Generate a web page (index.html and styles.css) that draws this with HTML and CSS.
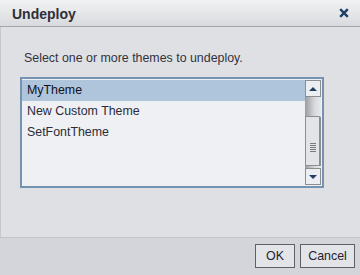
FILE: index.html
```html
<!DOCTYPE html>
<html lang="en">
<head>
    <meta charset="UTF-8">
    <title>Undeploy</title>
    <link rel="stylesheet" href="styles.css">
</head>
<body>
<div class="dialog">
    <div class="titlebar">
        <span class="title">Undeploy</span>
        <svg class="close" width="10" height="10" viewBox="0 0 10 10">
            <path d="M1.2 1.2 L8.8 8.8 M8.8 1.2 L1.2 8.8" stroke="#1f3f66" stroke-width="2.4" fill="none"/>
        </svg>
    </div>
    <div class="content">
        <p class="prompt">Select one or more themes to undeploy.</p>
        <div class="list">
            <div class="items">
                <div class="item selected">MyTheme</div>
                <div class="item">New Custom Theme</div>
                <div class="item">SetFontTheme</div>
            </div>
            <div class="scrollbar">
                <div class="sb-btn"><span class="arrow-up"></span></div>
                <div class="sb-track">
                    <div class="sb-thumb">
                        <div class="grip"></div>
                    </div>
                </div>
                <div class="sb-btn down"><span class="arrow-down"></span></div>
            </div>
        </div>
    </div>
    <div class="footer">
        <button class="btn ok">OK</button>
        <button class="btn cancel">Cancel</button>
    </div>
</div>
</body>
</html>
```

FILE: styles.css
```css
body {
    margin: 0;
    font-family: "Liberation Sans", Arial, sans-serif;
    background-color: #d3d5da;
}

.dialog {
    width: 360px;
    height: 275px;
    display: flex;
    flex-direction: column;
}

.titlebar {
    height: 27px;
    box-sizing: border-box;
    border-bottom: 1px solid #a4a6ab;
    background: linear-gradient(#f1f2f4, #d9dadd);
    display: flex;
    align-items: center;
    justify-content: space-between;
    padding: 0 11px 0 12px;
}

.title {
    font-size: 14px;
    font-weight: bold;
    color: #2e2e38;
    margin-top: 1px;
}

.close {
    display: block;
}

.content {
    height: 211px;
    box-sizing: border-box;
    background-color: #dfe0e4;
    border-left: 1px solid #c5c7cc;
    border-bottom: 1px solid #c2c4ca;
    padding: 24px 0 0 19px;
}

.prompt {
    margin: 0 0 12px 4px;
    font-size: 12.4px;
    color: #333340;
}

.list {
    width: 304px;
    height: 111px;
    box-sizing: border-box;
    border: 2px solid #7493b3;
    background-color: #eef0f3;
    display: flex;
}

.items {
    flex: 1;
    padding-top: 1px;
}

.item {
    height: 21px;
    line-height: 21px;
    padding-left: 5px;
    font-size: 12.4px;
    color: #2c2c38;
}

.item.selected {
    background-color: #afc5db;
    color: #111122;
}

.scrollbar {
    width: 16px;
    margin: 1px 1px 1px 0;
    display: flex;
    flex-direction: column;
    background-color: #e6e7ea;
}

.sb-btn {
    height: 17px;
    box-sizing: border-box;
    border: 1px solid #8c8e92;
    background-color: #eceef1;
    display: flex;
    align-items: center;
    justify-content: center;
}

.arrow-up {
    width: 0;
    height: 0;
    border-left: 4px solid transparent;
    border-right: 4px solid transparent;
    border-bottom: 4px solid #1f3f66;
}

.arrow-down {
    width: 0;
    height: 0;
    border-left: 4px solid transparent;
    border-right: 4px solid transparent;
    border-top: 4px solid #1f3f66;
}

.sb-track {
    flex: 1;
    display: flex;
    flex-direction: column;
    background: linear-gradient(to right, #9a9ca0, #d8d9dc 60%, #e8e9ec);
    padding-top: 19px;
}

.sb-thumb {
    flex: 1;
    margin-bottom: 2px;
    border: 1px solid #8c8e92;
    border-right: 2px solid #8c8e92;
    border-radius: 0 2px 0 0;
    background-color: #e3e4e7;
    display: flex;
    align-items: center;
    justify-content: center;
}

.grip {
    width: 6px;
    height: 9px;
    margin-top: 12px;
    background: repeating-linear-gradient(#777a80 0, #777a80 1px, transparent 1px, transparent 2px);
}

.footer {
    flex: 1;
    display: flex;
    justify-content: flex-end;
    align-items: flex-start;
    padding: 6px 5px 0 0;
    gap: 5px;
}

.btn {
    height: 24px;
    padding: 0;
    font-family: "Liberation Sans", Arial, sans-serif;
    font-size: 12.4px;
    color: #222230;
    background-color: #e3e4e8;
    border: 1px solid #5d6068;
    border-radius: 0;
}

.btn.ok {
    width: 40px;
}

.btn.cancel {
    width: 55px;
}
```
